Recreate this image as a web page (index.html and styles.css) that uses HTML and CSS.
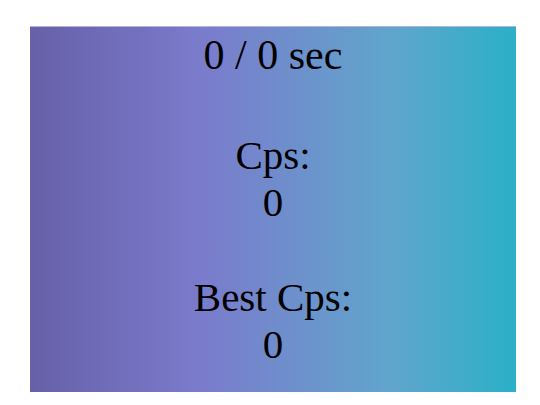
FILE: index.html
```html
<!DOCTYPE html>
<html>
<head>
<meta charset="utf-8">
<link rel="stylesheet" href="styles.css">
</head>
<body>
<div class="panel">
  <div class="timer">0 / 0 sec</div>
  <div class="stat">Cps:<br>0</div>
  <div class="stat best">Best Cps:<br>0</div>
</div>
</body>
</html>
```
FILE: styles.css
```css
html, body {
  margin: 0;
  padding: 0;
  background: #ffffff;
}
body {
  padding: 26px 24px 13px 30px;
}
.panel {
  height: 366px;
  box-sizing: border-box;
  padding-top: 5px;
  background: linear-gradient(to right, #6660a8 0%, #7b7bcc 35%, #5fa6cc 75%, #2ab0c8 100%);
  border-top: 1px solid #b8b0e0;
  font-family: "Liberation Serif", "Times New Roman", serif;
  font-size: 42px;
  line-height: 47px;
  color: #000;
  text-align: center;
}
.stat {
  margin-top: 53px;
  font-size: 41px;
}
.best {
  margin-top: 48px;
}
```
